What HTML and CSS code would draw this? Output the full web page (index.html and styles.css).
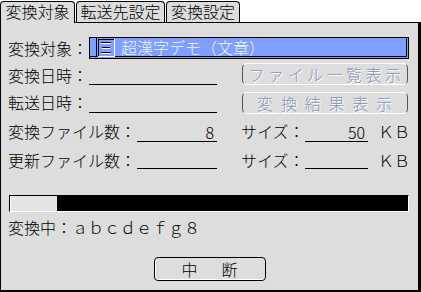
FILE: index.html
```html
<!DOCTYPE html>
<html lang="ja">
<head>
<meta charset="utf-8">
<link rel="stylesheet" href="styles.css">
</head>
<body>
<div class="tabbar">
  <div class="tab tab-active tab1">変換対象</div>
  <div class="tab tab2">転送先設定</div>
  <div class="tab tab3">変換設定</div>
</div>
<div class="panel">
  <div class="row row1">
    <span class="label w80">変換対象：</span>
    <div class="input">
      <svg class="icon" width="20" height="19" viewBox="0 0 20 19">
        <rect x="0" y="0" width="1" height="19" fill="#000"/>
        <rect x="2" y="1" width="16" height="1" fill="#000"/>
        <rect x="2" y="1" width="1" height="17" fill="#000"/>
        <rect x="18" y="1" width="1" height="18" fill="#fff"/>
        <rect x="2" y="18" width="17" height="1" fill="#fff"/>
        <rect x="5" y="4" width="10" height="2" fill="#fff"/>
        <rect x="5" y="4" width="10" height="1" fill="#000"/>
        <rect x="6" y="9" width="8" height="2" fill="#fff"/>
        <rect x="6" y="9" width="8" height="1" fill="#000"/>
        <rect x="5" y="14" width="10" height="2" fill="#fff"/>
        <rect x="5" y="14" width="10" height="1" fill="#000"/>
      </svg>
      <span class="input-text">超漢字デモ（文章）</span>
    </div>
  </div>
  <div class="row row2">
    <span class="label w80">変換日時：</span>
    <span class="field f128 mb1"></span>
    <button class="btn-dis btn-list">ファイル一覧表示</button>
  </div>
  <div class="row row3">
    <span class="label w80">転送日時：</span>
    <span class="field f128 mb0"></span>
    <button class="btn-dis btn-result">変換結果表示</button>
  </div>
  <div class="row row4">
    <span class="label w128">変換ファイル数：</span>
    <span class="field f80 mb0">8</span>
    <span class="label size-label">サイズ：</span>
    <span class="field f63 mb0">50</span>
    <span class="label unit">ＫＢ</span>
  </div>
  <div class="row row5">
    <span class="label w128">更新ファイル数：</span>
    <span class="field f80 mb2"></span>
    <span class="label size-label">サイズ：</span>
    <span class="field f63 mb2"></span>
    <span class="label unit">ＫＢ</span>
  </div>
  <div class="progress">
    <div class="progress-done"></div>
  </div>
  <div class="status">変換中：ａｂｃｄｅｆｇ８</div>
  <div class="stop-row">
    <button class="btn-stop">中　断</button>
  </div>
</div>
</body>
</html>
```
FILE: styles.css
```css
* { box-sizing: border-box; }
html, body {
  margin: 0;
  padding: 0;
  background: #ffffff;
  width: 421px;
  height: 292px;
  overflow: hidden;
  font-family: "Noto Sans CJK JP", "Noto Sans", sans-serif;
  font-weight: 300;
  font-size: 16px;
  color: #000;
}
.tabbar {
  display: flex;
  align-items: flex-end;
  height: 22px;
}
.tab {
  height: 21px;
  border: 1px solid #000;
  border-bottom: none;
  border-radius: 4px 4px 0 0;
  background: #dddddd;
  text-align: center;
  line-height: 19px;
  font-size: 16px;
}
.tab1 { width: 75px; }
.tab2 { width: 89px; margin-left: 1px; }
.tab3 { width: 74px; margin-left: 1px; }
.tab-active {
  height: 22px;
  margin-bottom: -1px;
  position: relative;
  z-index: 1;
}
.panel {
  height: 270px;
  background: #dddddd;
  border-top: 1px solid #000;
  border-left: 1px solid #000;
  border-right: 3px solid #000;
  border-bottom: 2px solid #000;
  padding-left: 7px;
  display: flex;
  flex-direction: column;
}
.row {
  display: flex;
  height: 23px;
  align-items: center;
}
.row1 { height: 22px; margin-top: 14px; }
.row2 { margin-top: 4px; }
.row3 { margin-top: 4px; }
.row4 { margin-top: 6px; }
.row5 { margin-top: 6px; }
.label {
  line-height: 16px;
  white-space: nowrap;
  flex: none;
}
.w80 { width: 80px; }
.w128 { width: 128px; }
.size-label { width: 64px; margin-left: 24px; }
.unit { margin-left: 10px; }
.input {
  margin-left: 1px;
  width: 320px;
  height: 22px;
  background: #7f9ffc;
  border-top: 1px solid #000;
  border-left: 1px solid #000;
  border-right: 3px double #000;
  border-bottom: 3px double #000;
  display: flex;
  align-items: flex-start;
  padding-left: 6px;
}
.icon { flex: none; display: block; }
.input-text {
  margin-left: 5px;
  color: #eef2ff;
  line-height: 18px;
  white-space: nowrap;
}
.field {
  flex: none;
  height: 18px;
  border-bottom: 1px solid #000;
  align-self: flex-end;
  text-align: right;
  padding-right: 3px;
  line-height: 17px;
}
.f128 { width: 128px; margin-left: 1px; }
.f80 { width: 80px; margin-left: 1px; }
.f63 { width: 63px; }
.mb0 { margin-bottom: 0; }
.mb1 { margin-bottom: 1px; }
.mb2 { margin-bottom: 2px; }
.btn-dis {
  flex: none;
  align-self: flex-start;
  margin-left: 25px;
  width: 166px;
  height: 22px;
  padding: 0;
  background: #dddddd;
  border: 1px solid;
  border-color: #ffffff #555555 #ffffff #555555;
  border-radius: 5px;
  font-family: "Noto Sans CJK JP", "Noto Sans", sans-serif;
  font-weight: 300;
  font-size: 16px;
  line-height: 19px;
  color: #8a94b4;
  text-shadow: 1px 1px 0 #ffffff;
  white-space: nowrap;
}
.btn-list { letter-spacing: 3.5px; text-indent: 3px; }
.btn-result { letter-spacing: 7.8px; text-indent: 7px; margin-top: 2px; }
.progress {
  margin-top: 24px;
  margin-left: 1px;
  width: 400px;
  height: 17px;
  background: #000;
  border-top: 1px solid #000;
  border-left: 1px solid #000;
  border-right: 1px solid #fff;
  border-bottom: 1px solid #fff;
  display: flex;
}
.progress-done {
  width: 47px;
  height: 15px;
  background: #e4e4e4;
  border-left: 1px solid #fff;
}
.status {
  margin-top: 7px;
  line-height: 16px;
  white-space: nowrap;
}
.stop-row {
  margin-top: 22px;
  margin-left: -7px;
  display: flex;
  justify-content: center;
}
.btn-stop {
  width: 112px;
  height: 24px;
  padding: 0 0 0 4px;
  background: #dddddd;
  border: 1px solid #000;
  border-radius: 4px;
  box-shadow: inset 1px 0 0 #fff, inset 0 -1px 0 #fff;
  font-family: "Noto Sans CJK JP", "Noto Sans", sans-serif;
  font-weight: 300;
  font-size: 16px;
  line-height: 20px;
  letter-spacing: 4px;
  color: #000;
}
```
